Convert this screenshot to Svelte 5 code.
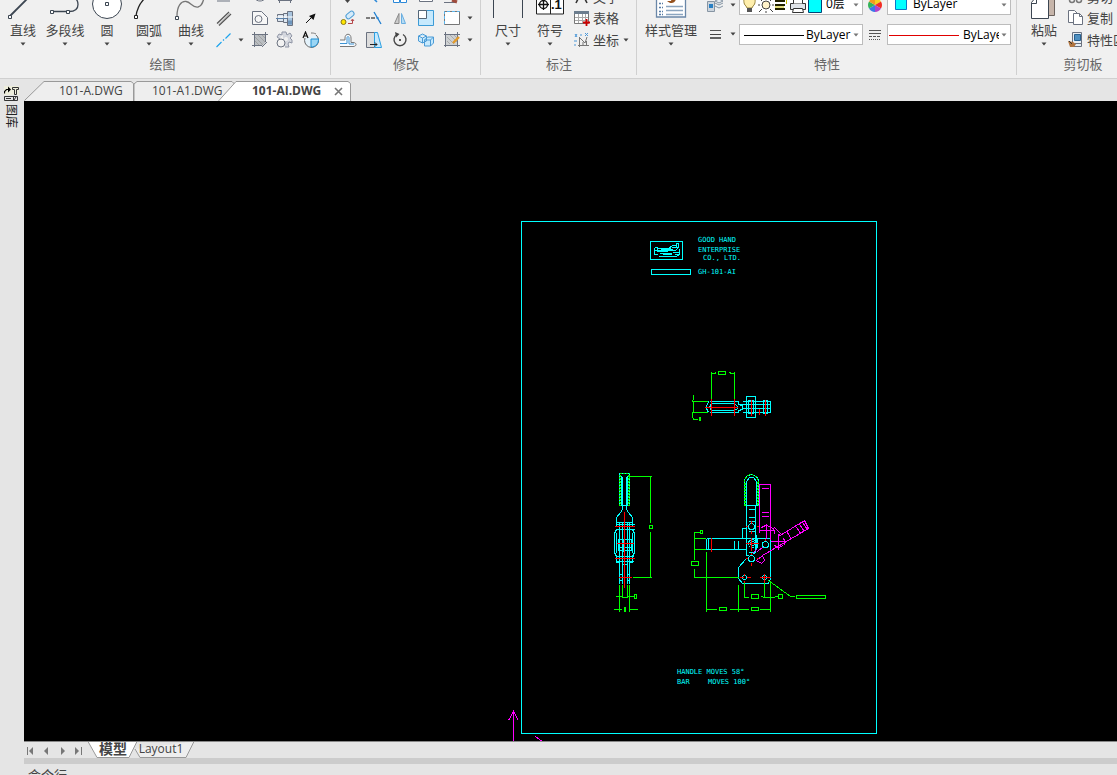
<script>
  const drawTools = [
    { label: '直线', icon: 'line' },
    { label: '多段线', icon: 'poly' },
    { label: '圆', icon: 'circle' },
    { label: '圆弧', icon: 'arc' },
    { label: '曲线', icon: 'curve' }
  ];
  const drawGrid = [
    ['cutA', '', 'cutB', 'cutC', ''],
    ['dline', '', 'region', 'cylinder', 'ray'],
    ['xline', 'drop', 'hatch', 'gear', 'textcircle']
  ];
  const modifyGrid = [
    ['cutD', 'cutE', 'cutF', 'cutG', 'cutH', ''],
    ['copy', 'trim', 'mirror', 'scale', 'select', 'drop'],
    ['offset', 'stretch', 'rotate', 'array', 'edit', 'drop']
  ];
  const names = {
    cutA: '构造', cutB: '椭圆', cutC: '矩形', dline: '双线', region: '面域', cylinder: '轴', ray: '箭头',
    xline: '中心线', drop: '更多', hatch: '填充', gear: '齿轮', textcircle: '局部放大',
    cutD: '移动', cutE: '打断', cutF: '复制对象', cutG: '圆角', cutH: '删除', copy: '复制', trim: '修剪',
    mirror: '镜像', scale: '缩放', select: '选择', offset: '偏移', stretch: '拉伸', rotate: '旋转',
    array: '阵列', edit: '编辑填充'
  };
  const docs = [
    { name: '101-A.DWG', kind: 'first' },
    { name: '101-A1.DWG', kind: 'mid' },
    { name: '101-AI.DWG', kind: 'active' }
  ];
</script>

{#snippet drop()}
  <svg class="drop" width="10" height="10" viewBox="0 0 10 10"><path d="M2.500 3.500h5L5 6.500z" fill="currentColor" /></svg>
{/snippet}

{#snippet big(kind)}
  <svg width="42" height="22" viewBox="0 0 42 22" fill="none" stroke="#3c4652" stroke-width="1.3">
    {#if kind === 'line'}
      <path d="M8 16L25-1" stroke-width="1.8" /><path d="M6.500 15.500h3v3h-3z" fill="#fff" stroke-width="1" />
    {:else if kind === 'poly'}
      <path d="M8 11.500h17c6 0 9-3 9-7s-2-6-4-7" />
      <path d="M6.500 10.500h3v3h-3zM22.500 10.500h3v3h-3z" fill="#fff" stroke-width="1" />
    {:else if kind === 'circle'}
      <circle cx="21" cy="4" r="14.500" fill="#fff" stroke-width="1" /><path d="M19.500 2.500h3v3h-3z" fill="#fff" stroke-width="1" />
    {:else if kind === 'arc'}
      <path d="M8 16C9 9 12 3 17-2" stroke="#222" /><path d="M6.500 15.500h3v3h-3z" fill="#fff" stroke="#222" stroke-width="1" />
    {:else if kind === 'curve'}
      <path d="M7 16C7 6 11 1 16 1.500S22 8 28 7c4-1 5-5 6-9" stroke="#777" /><path d="M5.500 16.500h3v3h-3z" fill="#fff" stroke-width="1" />
    {:else if kind === 'dim'}
      <path d="M6.500 0v18M35.500 0v18" stroke-width="1" />
    {:else if kind === 'symbol'}
      <path d="M7.500-2h27v16h-27z" fill="#fff" stroke-width="1" stroke="#222" /><path d="M21.500 0v14" stroke="#222" stroke-width="1" />
      <circle cx="14.500" cy="4.500" r="4" stroke="#111" /><path d="M9 4.500h11M14.500 0v10" stroke="#111" />
    {:else if kind === 'style'}
      <path d="M6.500-2h29v19h-29z" fill="#fff" stroke="#6a87a8" />
      <path d="M9 3.500h4M9 7.500h4M9 11.500h4M9 14.500h4" stroke="#567ba5" stroke-dasharray="2 1" /><path d="M16 6.500h17M16 10.500h17M16 14.500h17" stroke="#8ba5bf" />
      <path d="M17 1c3 3 8 3 9-2l-4-1-1 3z" fill="#96521f" stroke="none" />
    {:else if kind === 'paste'}
      <path d="M24.500-1h7v16.500h-7z" fill="#c6b5aa" stroke="#6b625d" stroke-width="1" />
      <path d="M8.500 18.500v-16l4-5h13v21z" fill="#fff" stroke-width="1" /><path d="M8.500 3.500h5v-5" stroke-width="1" />
    {/if}
  </svg>
{/snippet}

{#snippet small(kind, h = 18)}
  <svg width="18" height={h} viewBox={h === 7 ? '0 0 18 7' : '0 0 18 18'} fill="none" stroke="#6b7280" stroke-width="1">
    {#if kind === 'cutA'}<path d="M2 1h13" />
    {:else if kind === 'cutB'}<path d="M4-2c1 4 9 4 10 0" />
    {:else if kind === 'cutC'}<path d="M2 .5h14M3.500 0v3M14.500 0v3" />
    {:else if kind === 'cutD'}<path d="M6 0h5L8.500 3z" fill="#444" stroke="none" />
    {:else if kind === 'cutE'}<path d="M9-1l3 3" stroke="#2b88d8" stroke-width="1.500" />
    {:else if kind === 'cutF'}<path d="M2.500-1h6v3.500h-6zM9.500-1h6v3.500h-6z" stroke="#2b88d8" fill="#fff" />
    {:else if kind === 'cutG'}<path d="M2.500-1v2.500h13V-1" fill="#fff" />
    {:else if kind === 'cutH'}<path d="M1 2.500h12" /><path d="M9 0l5 2" stroke="#a04b3c" stroke-width="3" />
    {:else if kind === 'dline'}<path d="M2 14.500L14 3M4 16.500L16 5" stroke="#555" stroke-width="1.200" /><path d="M3 15.500L15 4" stroke="#bbb" />
    {:else if kind === 'region'}<path d="M1.500 15.500v-13h9l6 6v7z" fill="#f7f7f7" /><circle cx="7.500" cy="10" r="3.500" />
    {:else if kind === 'cylinder'}
      <path d="M1.500 5.500h6v7h-6zM7.500 4.500h4v9h-4z" fill="#dbe6f1" /><path d="M11.500 2.500h5v14h-5z" fill="#a9c5df" />
      <path d="M1 8h16" stroke="#fff" /><path d="M0 9.500h11" stroke="#5b80a8" /><path d="M12 13.500h4" stroke="#6f96bd" stroke-width="4" />
    {:else if kind === 'ray'}<path d="M4 14l5-5" stroke="#111" /><path d="M13.500 4.500L11.500 11 7 7z" fill="#111" stroke="none" />
    {:else if kind === 'xline'}<path d="M1.500 16l5-5M8 9.500l1-1M10.500 7.500l5-5" stroke="#1ca3ec" stroke-width="1.200" />
    {:else if kind === 'hatch'}
      <path d="M3 3h12v8l-4 4H3z" fill="#b9bdc1" stroke="none" /><path d="M3.500 1v15M14.500 1v10M1 3.500h16M1 14.500h10M11 16l5-5" />
      <path d="M4 6l8 8M7 4l7 7M11 4l3 3M4 10l4 4" stroke="#999" stroke-width=".8" />
    {:else if kind === 'gear'}
      <path d="M6 1h4l1 3 3-2 2 3-2 2 2 2v3l-3-1-1 2 1 3H9M6 1v3L3 3 1 6l3 2" fill="#d4d7de" stroke="#8f95a5" />
      <circle cx="5" cy="12" r="4" fill="#f2f2f2" /><circle cx="10" cy="8" r="2" fill="#f2f2f2" stroke="none" />
    {:else if kind === 'textcircle'}
      <path d="M3 7a7 7 0 1 0 11-3" fill="#e3f2fb" stroke="#666" /><path d="M9 8h7.500c0 5-3 8-7.500 8z" fill="#9bd6f5" stroke="#1d8ed1" />
      <path d="M1 7l2.500-6L6 7M2 5h3" stroke="#111" stroke-width="1.200" /><path d="M9 2c2 0 3 0 5 1" stroke="#777" />
    {:else if kind === 'copy'}
      <circle cx="4.500" cy="13" r="2.500" fill="#ffe600" stroke="#8a7a1c" /><rect x="6.500" y="3.500" width="9" height="5" rx="2.500" fill="#d5ebfa" stroke="#4f9ed5" transform="rotate(-40 11 6)" />
      <path d="M9 14.500h4.500V11M12 12l1.500-2 1.500 2" stroke="#b4464a" />
    {:else if kind === 'trim'}<path d="M1 9h9" stroke="#555" stroke-width="1.400" stroke-dasharray="4 1" /><path d="M11 9h3" stroke="#2b88d8" /><path d="M9 3l7 12" stroke="#1e7ed0" stroke-width="1.300" />
    {:else if kind === 'mirror'}<path d="M8 4.500v10H3.500z" fill="#ccc" stroke="#888" /><path d="M10.500 4.500v10h4z" fill="#b5dcf5" stroke="#69aee0" />
    {:else if kind === 'scale'}<path d="M1.500 1.500h15v15h-15z" fill="#c6e9fd" stroke="#3c9bd6" /><path d="M1.500 1.500h8v8h-8z" fill="#fff" stroke="#567" />
    {:else if kind === 'select'}<path d="M1.500 2.500h15v13h-15z" fill="#fff" stroke="#777" /><path d="M1.500 15v-12.500h15" stroke="#5bb5ee" stroke-dasharray="3 2" />
    {:else if kind === 'offset'}
      <path d="M1 15.500h13c4 0 4-4 0-4h-2V7c0-5-6-5-6 0v2H1" fill="#f7fbff" stroke="#777" /><path d="M1 12.500h7V7c0-2 2-2 2 0v6h5" stroke="#3c93d3" />
    {:else if kind === 'stretch'}<path d="M1.500 1.500h8v15h-8z" fill="#ddd" /><path d="M9.500 1.500h3l4 15h-7z" fill="#c6e9fd" stroke="#2b9fe2" /><path d="M5 13.500h7M10 11.500l2 2-2 2" stroke="#222" />
    {:else if kind === 'rotate'}<path d="M6 3.500A6 6 0 1 0 12 3.500" stroke="#444" stroke-width="1.400" /><path d="M4 1l4.500 2L5 6.500z" fill="#444" stroke="none" /><circle cx="9" cy="9" r="1" fill="#222" stroke="none" />
    {:else if kind === 'array'}
      <path d="M1.500 5l4-2 4 2v5l-4 2-4-2zM1.500 5l4 2 4-2M5.500 7v5M7.500 9l3-3h6v6l-3 3h-6zM7.500 9h6v6M13.500 9l3-3" fill="#c6e9fd" stroke="#4b9bd6" />
    {:else if kind === 'edit'}
      <path d="M3 3h12v11H3z" fill="#ced1d3" stroke="none" /><path d="M2.500 1v15M14.500 1v15M1 3.500h16M1 14.500h16" />
      <path d="M4 6l7 7M7 4l7 7M11 4l3 3M4 10l3 3" stroke="#999" stroke-width=".7" /><path d="M10 12l6-6" stroke="#e39b2b" stroke-width="2.400" />
    {:else if kind === 'table'}
      <path d="M1.500 2.500h14v12h-14z" fill="#fff" stroke="#777" /><path d="M1 3.500h15" stroke="#6c7d8e" stroke-width="3" /><path d="M2 8.500h13M2 11.500h13M5.500 5v9M9.500 5v9M12.500 5v9" stroke="#aaa" />
      <path d="M10 13.500h7M13.500 10v7" stroke="#c00" stroke-width="1.800" />
    {:else if kind === 'coord'}
      <path d="M6.500 16V6M5 14.500h11M7 7l5 5 2-6M10 14v-3M13.500 14v-4" stroke="#777" /><path d="M2 3l2 3M4 3L2 6M7 4h2M12 2l3 3M15 2l-3 3M1 10h3M1 14h2" stroke="#4a97d8" />
    {:else if kind === 'bars'}<path d="M4 5.500h11" stroke="#555" /><path d="M4 9.500h11" stroke="#444" /><path d="M4 13h11" stroke="#333" stroke-width="1.500" />
    {:else if kind === 'ltype'}<path d="M3 4.500h12M3 7.500h12" stroke="#555" /><path d="M3 10.500h12" stroke="#555" stroke-dasharray="3 1" /><path d="M3 13.500h12" stroke="#555" stroke-dasharray="1 1" />
    {:else if kind === 'pages'}<path d="M1.500 1.500h6l3 3v9h-9z" fill="#fff" /><path d="M6.500 4.500h6l3 3v8h-9z" fill="#fff" /><path d="M12.500 4.500v3h3" />
    {:else if kind === 'match'}
      <path d="M5.500 1.500h9v14h-9z" fill="#e8eef4" /><path d="M7.500 3.500h6v6h-6z" fill="#4d8fc0" stroke="#27608f" /><path d="M8 12.500h6" /><path d="M1 10l5 1 3 2-2 3H3z" fill="#b0743f" stroke="none" /><path d="M2 10l3 3" stroke="#333" />
    {/if}
  </svg>
{/snippet}

{#snippet tool(label, icon)}
  <button class="tool">{@render big(icon)}<span>{label}</span>{@render drop()}</button>
{/snippet}

{#snippet grid(rows)}
  {#each rows as row, r}
    {#each row as k}
      {#if k === 'drop'}
        <button class="cell" aria-label="更多">{@render drop()}</button>
      {:else if k}
        <button class="cell" aria-label={names[k]}>{@render small(k, r === 0 ? 7 : 18)}</button>
      {:else}
        <span></span>
      {/if}
    {/each}
  {/each}
{/snippet}

<div class="page">
  <header class="ribbon">
    <section class="group draw">
      <div class="body">
        {#each drawTools as t}{@render tool(t.label, t.icon)}{/each}
        <div class="grid g-draw">{@render grid(drawGrid)}</div>
      </div>
      <h2>绘图</h2>
    </section>
    <section class="group modify">
      <div class="body"><div class="grid g-mod">{@render grid(modifyGrid)}</div></div>
      <h2>修改</h2>
    </section>
    <section class="group note">
      <div class="body">
        {@render tool('尺寸', 'dim')}
        <div class="symbol">{@render tool('符号', 'symbol')}<b>.1</b></div>
        <div class="rows">
          <button class="row cut"><svg width="18" height="7" viewBox="0 0 18 7"><path d="M3 3l3-6M14 3l-3-6" stroke="#333" stroke-width="1.600" /></svg><span>文字</span></button>
          <button class="row">{@render small('table')}<span>表格</span></button>
          <button class="row">{@render small('coord')}<span>坐标</span>{@render drop()}</button>
        </div>
      </div>
      <h2>标注</h2>
    </section>
    <section class="group props">
      <div class="body">
        <div class="wide">{@render tool('样式管理', 'style')}</div>
        <div class="minis">
          <button class="mini top" aria-label="图层管理">
            <svg width="18" height="14" viewBox="0 0 18 14" fill="none" stroke="#8795a3"><path d="M1.500 1.500h7v10h-7z" fill="#ccd5de" /><path d="M3 4h4v4H3z" fill="#2980c4" stroke="none" /><path d="M9 1l4-2 4 2-4 2zM9 3l4 2 4-2M9 6l4 2 4-2" fill="#e7edf2" /></svg>
            {@render drop()}
          </button>
          <button class="mini" aria-label="线宽">{@render small('bars')}{@render drop()}</button>
        </div>
        <div class="combos">
          <div class="combo top">
            <svg width="84" height="14" viewBox="0 0 84 14">
              <path d="M6 6C3 4 4-1 4-3h11c0 2 1 7-2 9l-1 2H7z" fill="#ffefad" stroke="#9a8640" /><path d="M7 8h5v4H7z" fill="#555" />
              <circle cx="26" cy="5" r="4" fill="#fff2c9" stroke="#444" /><path d="M20 5h-2M32 5h2M26 11v2M22 9l-3 3M30 9l3 3M22 1l-3-3M30 1l3-3" stroke="#444" />
              <path d="M35 1h10M35 5h10M35 9h10" stroke="#222200" stroke-width="2" /><path d="M35 7h9M46.500 0v4" stroke="#c7bd00" />
              <path d="M50.500 3.500h15v6h-15z" fill="#dfe3e8" stroke="#333" /><path d="M53.500 3.500V-2h9v5.500M53.500 8.500h9l1 4h-11z" fill="#fff" stroke="#333" />
              <path d="M68.500-1h13v13.500h-13z" fill="#0ff" stroke="#047" />
            </svg>
            <select class="fixed" aria-label="图层"><option>0层</option></select>{@render drop()}
          </div>
          <div class="combo">
            <svg height="18" width="60"><path d="M0 9.500h60" stroke="#000" /></svg>
            <select class="fixed" aria-label="线宽值"><option>ByLayer</option></select>{@render drop()}
          </div>
        </div>
        <div class="swatches">
          <svg width="25" height="14" viewBox="0 0 25 14">
            <path d="M12 5V-2A7 7 0 0 1 18 1.500z" fill="#f7d11e" /><path d="M12 5l6-3.500A7 7 0 0 1 18 8.500z" fill="#f22c24" /><path d="M12 5l6 3.500A7 7 0 0 1 12 12z" fill="#b143c9" /><path d="M12 5v7A7 7 0 0 1 6 8.500z" fill="#3a78e8" /><path d="M12 5L6 8.500A7 7 0 0 1 6 1.500z" fill="#33b35a" /><path d="M12 5L6 1.500A7 7 0 0 1 12-2z" fill="#f39a1e" />
          </svg>
          {@render small('ltype')}
        </div>
        <div class="combos">
          <div class="combo top">
            <svg width="22" height="14" viewBox="0 0 22 14"><path d="M7.500-1h11v10.500h-11z" fill="#0ff" stroke="#0878c8" /></svg>
            <select aria-label="颜色"><option>ByLayer</option></select>{@render drop()}
          </div>
          <div class="combo tight">
            <svg width="70" height="18"><path d="M0 9.500h70" stroke="#e00000" /></svg>
            <select aria-label="线型"><option>ByLayer</option></select>{@render drop()}
          </div>
        </div>
      </div>
      <h2>特性</h2>
    </section>
    <section class="group clip">
      <div class="body">
        {@render tool('粘贴', 'paste')}
        <div class="rows">
          <button class="row cut"><svg width="18" height="7" viewBox="0 0 18 7" fill="none" stroke="#777" stroke-width="1.500"><circle cx="5" cy="0" r="2.500" /><circle cx="12" cy="0" r="2.500" /></svg><span>剪切</span></button>
          <button class="row">{@render small('pages')}<span>复制</span></button>
          <button class="row">{@render small('match')}<span>特性匹配</span></button>
        </div>
      </div>
      <h2>剪切板</h2>
    </section>
  </header>

  <div class="work">
    <aside>
      <svg width="16" height="18" viewBox="0 0 16 18" fill="none" stroke="#333">
        <path d="M0 0h15v9H0z" fill="#eeeedc" stroke="none" />
        <path d="M.5 7.500v-2l2-2H5" stroke="#000" stroke-width="1.200" /><path d="M4 .5l3 3-3 3z" fill="#000" stroke="none" /><path d="M8.500 1.500h6v2h-2v5h-2v-5h-2z" />
        <path d="M.5 10.500h13v4H.5z" /><path d="M2 12.500h5M9.500 11v3M12 11l-2 3" />
      </svg>
      <span class="side">图库</span>
    </aside>
    <main>
      <nav class="docs">
        {#each docs as d}
          <div class="doc {d.kind}">
            {#if d.kind === 'first'}
              <svg width="110" height="22" viewBox="0 0 110 22"><path d="M.5 21.500L20 2.500h87l2.500 2V22" fill="#eee" stroke="#999" /></svg>
            {:else if d.kind === 'mid'}
              <svg width="103" height="22" viewBox="0 0 103 22"><path d="M0 22V5l3-2.500h95l3 3V22" fill="#eee" stroke="#999" /></svg>
            {:else}
              <svg width="133" height="22" viewBox="0 0 133 22"><path d="M.5 22L18 2.500h112l2.500 2V22" fill="#fff" stroke="#999" /></svg>
            {/if}
            <button>{d.name}</button>
            {#if d.kind === 'active'}
              <button class="close" aria-label="关闭"><svg width="9" height="9" viewBox="0 0 9 9"><path d="M1 1l7 7M8 1L1 8" stroke="#777" stroke-width="1.600" /></svg></button>
            {/if}
          </div>
        {/each}
      </nav>
      <div class="canvas">
        <svg class="dwg" width="100%" height="100%" fill="none">
          <g transform="translate(-23.500 -100.500)" shape-rendering="crispEdges">
            <g stroke="#0ff">
              <path d="M521 221h355v512H521z" />
              <path d="M650 241h32v18h-32zM651 269h39v5h-39z" />
              <path d="M654 247h3M654 250h3M654 254h3M654 247v7M657 248h13M657 251h10M659 253h12M656 250h14M668 248l4-3h4M670 250h5l3-3v-4h-2v3M658 256h18l3-2v-6M662 254h9M660 249h12M672 252h7M674 254h4M671 247h6" />
              <path d="M657 248h6v3h-6z" />
              <!-- plan view -->
              <path d="M709 401h29M709 412h29M708 401l-2 5v2l2 4M711 403h23l3 3v2l-3 2h-23l-2-3 2-4zM738 404h32M742 401h28v11h-28M741 408h29M738 401v3l4 1v4l-4 1v2M746 396h9v21h-9zM748 400h5v13h-5zM763 400h4v13h-4zM757 412h4" />
              <!-- front view -->
              <path d="M622 476v33l-2 3-4 5v8M626 476v33l2 3 4 5v8M619 521v62M622 521v62M627 521v62M629 521v62" />
              <path d="M616 522h16M615 524h19M615 529h19M616 529l-2 4v19l2 4v6h3M632 529l2 4v19l-2 4v6h-3M615 556h18M615 561h18M618 539h13v11h-13zM618 547h13M623 538v13M616 532v20M632 532v20M622 564h5M619 574h3M627 574h2M619 580h3M627 580h2" />
              <!-- side view -->
              <path d="M746 505h9v47M746 505v47M748 509h6M748 517h6M748 521h6M748 531h7M748 552h6M742 538v-10h4M756 534v12M706 538h64M706 549h40M706 538v11M708 538v11M734 540v8M738 540v8M770 538v40l-2 5h-26l-4-5v-11l8-9M748 555h-2v-9M757 538v8l-4 8" />
              <circle cx="751" cy="526" r="3" /><circle cx="752" cy="543" r="4" /><circle cx="752" cy="543" r="2" />
              <circle cx="765" cy="544" r="3" /><circle cx="751" cy="558" r="3" />
              <circle cx="744" cy="577" r="2" /><circle cx="764" cy="577" r="2" />
              <path d="M744 505v-26l3-4 4-1 5 2 2 4v25zM746 505v-24l3-4h4l3 4v24M619 473h10v32h-10zM621 475v30M627 475v30" />
            </g>
            <g stroke="#0f0">
              <path d="M744 505v-26l3-4 4-1 5 2 2 4v25M745 505v-24M757 481v24M619 473h10M620 474v31M628 474v31M619 505v-31M629 505v-31" stroke-dasharray="2 1" />
              <path d="M711 371v27M734 371v27M711 373h3l2-1M734 373h-3l-2-1M718 371h7v3h-7zM693 394v4l-1 3h15M693 401v11M707 412h-15v4l1 3h4M699 417h1v3h-1z" />
              <path d="M627 476h24M650 476v46M649 525h3v3h-3zM650 531v46M632 577h19M619 584v27M622 584v13h5v-13M629 584v27M615 596h7M627 596h7M634 594h2v4h-2zM613 609h8M628 609h9M624 607h1v4h-1z" />
              <path d="M693 538h12M693 549h12M694 559v-27h5M700 530h2v3h-2zM691 561h7v4h-7zM694 568v9M693 577h45M706 551v60M738 584v27M770 582v29M744 582v15h4M764 582v15M706 609h10M729 609h19M759 609h11M719 607h7v3h-7zM751 607h7v3h-7zM751 594h7v4h-7zM761 596l3 1h6M771 597l7-1M778 594h4v4h-4zM768 580l22 16h4M796 595h29v3h-29z" />
            </g>
            <g stroke="#f0f">
              <path d="M759 532v-48h11v55M761 488h7M761 512h7M761 516h7M759 530h14M766 523v15M761 527l4-2 5 1 4 4v3M770 541h16M778 533v16M783 538l2 4-2 3-5 2-4-2M762 555l46-27-4-8-26 16M796 527l5 7M799 524l5 7M802 522l5 7M787 532l4 7M772 529l2-2 6 6-2 3M756 549l-4 4M757 551l6-5M756 560l5 3 3-3-2-5z" />
              <path d="M513 742v-31l-5 9M513 711l5 9M535 736l4 3 5 3" />
            </g>
            <g stroke="#f00">
              <path d="M704 407h33M711 398v17M734 398v17M751 399v16M759 408v6M765 399v16M624 511v76M614 526h20M616 543h17M614 558h20M618 577h13" />
              <path d="M711 537v14M745 526h2M756 526h2M751 520v3M751 530v3M745 543h13M751 537v13M765 538v2M745 558h2M756 558h2M751 552v2M751 562v3M739 577h4M746 577h4M744 573v2M744 580v2M759 577h11M764 573v9" />
            </g>
          </g>
          <g transform="translate(-24 -101)" class="lettering">
            <text x="698" y="242">GOOD HAND</text><text x="698" y="252">ENTERPRISE</text><text x="703" y="260">CO., LTD.</text>
            <text x="698" y="274">GH-101-AI</text>
            <text x="677" y="674">HANDLE MOVES 58°</text><text x="677" y="684">BAR</text><text x="708" y="684">MOVES 100°</text>
          </g>
        </svg>
      </div>
      <nav class="layouts">
        <button aria-label="第一个"><svg width="16" height="16"><path d="M3.500 5v8" stroke="#777" /><path d="M9 5v8L5 9z" fill="#777" /></svg></button>
        <button aria-label="上一个"><svg width="16" height="16"><path d="M8 5v8L4 9z" fill="#777" /></svg></button>
        <button aria-label="下一个"><svg width="16" height="16"><path d="M5 5v8l4-4z" fill="#777" /></svg></button>
        <button aria-label="最后一个"><svg width="16" height="16"><path d="M9.500 5v8" stroke="#777" /><path d="M3 5v8l4-4z" fill="#777" /></svg></button>
        <button class="model"><svg width="50" height="16"><path d="M0-.5l9 16h32l8-16" fill="#fff" stroke="#999" /></svg><span>模型</span></button>
        <button class="layout"><svg width="62" height="16"><path d="M1 7l5 8.500h46L60-.5" fill="#eee" stroke="#999" /></svg><span>Layout1</span></button>
      </nav>
      <div class="split"></div>
      <div class="command">命令行</div>
    </main>
  </div>
</div>

<style>
  :global(body) { margin: 0; overflow: hidden; }
  .page {
    display: flex; flex-direction: column; height: 100vh; overflow: hidden;
    background: #e5e5e5; color: #444; font: 13px/16px "Open Sans", "Noto Sans CJK SC", sans-serif;
  }
  button { border: 0; padding: 0; margin: 0; background: none; color: inherit; font: inherit; white-space: nowrap; }
  svg { display: block; flex: none; }
  .ribbon { display: flex; flex: none; height: 78px; background: #f0f0f0; border-bottom: 1px solid #d0d0d0; overflow: hidden; }
  .group { display: flex; flex: none; flex-direction: column; position: relative; box-sizing: border-box; }
  .group::after { content: ""; position: absolute; right: 0; top: 0; height: 75px; border-right: 1px solid #d0d0d0; }
  .body { display: flex; height: 56px; }
  h2 { margin: 0; font: inherit; text-align: center; color: #666; }
  .draw { width: 331px; }
  .draw .body { padding-left: 2px; }
  .draw h2 { padding-right: 6px; }
  .modify { width: 150px; }
  .modify .body { padding-left: 4px; }
  .note { width: 156px; }
  .note .body { padding-left: 6px; }
  .props { width: 380px; }
  .props .body { padding-left: 4px; }
  .clip { width: 132px; }
  .clip .body { padding-left: 6px; }
  .tool { display: flex; flex-direction: column; align-items: center; width: 42px; height: 50px; }
  .tool span { height: 17px; }
  .wide { width: 60px; display: flex; justify-content: center; }
  .symbol { position: relative; }
  .symbol b { position: absolute; left: 22px; top: -3px; font: bold 13px/16px "Liberation Sans", sans-serif; color: #111; }
  .grid { display: grid; grid-template-rows: 7px 22px 22px; }
  .g-draw { grid-template-columns: 23px 12px 25px 26px 26px; }
  .g-mod { grid-template-columns: repeat(5, 26px) 10px; }
  .cell { display: flex; align-items: center; justify-content: center; }
  .rows { display: flex; flex-direction: column; padding-left: 2px; }
  .row { display: flex; align-items: center; height: 22px; gap: 2px; }
  .row.cut { height: 7px; align-items: flex-end; overflow: hidden; }
  .row.cut span { line-height: 20px; }
  .minis { display: flex; flex-direction: column; gap: 10px; width: 38px; padding-left: 5px; box-sizing: border-box; }
  .mini { display: flex; align-items: center; gap: 4px; height: 20px; }
  .mini.top { height: 14px; align-items: flex-start; }
  .combos { display: flex; flex-direction: column; gap: 9px; width: 124px; }
  .combo { display: flex; align-items: center; box-sizing: border-box; height: 21px; border: 1px solid #bcbcbc; background: #fff; color: #777; padding: 0 1px 0 4px; }
  .combo.top { height: 15px; border-top: 0; padding-left: 0; align-items: flex-start; }
  .combo.top select { margin-top: -5px; }
  .combo.tight { padding-left: 1px; }
  .combo.tight select { padding-left: 4px; }
  select { appearance: none; flex: 1; min-width: 0; height: 18px; border: 0; padding: 0; padding-left: 3px; margin: 0; background: none; color: #000; font: 12px/18px "Open Sans", "Noto Sans CJK SC", sans-serif; overflow: hidden; }
  .fixed { padding-left: 2px; }
  .swatches { display: flex; flex-direction: column; align-items: center; gap: 12px; width: 24px; }
  .work { display: flex; flex: 1; min-height: 0; }
  aside { flex: none; width: 24px; box-sizing: border-box; padding: 7px 0 0 4px; }
  .side { display: block; writing-mode: vertical-rl; text-orientation: sideways; font-size: 12px; line-height: 14px; color: #222; }
  main { display: flex; flex: 1; flex-direction: column; min-width: 0; }
  .docs { display: flex; flex: none; height: 22px; font-size: 12px; }
  .doc { position: relative; display: flex; align-items: center; }
  .doc > svg { position: absolute; left: 0; top: 0; }
  .doc button { position: relative; padding-top: 2px; }
  .first { width: 110px; padding-left: 35px; box-sizing: border-box; }
  .mid { width: 103px; padding-left: 18px; box-sizing: border-box; }
  .active { width: 133px; margin-left: -19px; padding-left: 34px; box-sizing: border-box; font-weight: bold; gap: 13px; }
  .canvas { flex: 1; min-height: 0; overflow: hidden; background: #000; border-bottom: 1px solid #888; }
  .lettering { fill: #0ff; font: 7px "DejaVu Sans Mono", monospace; }
  .layouts { display: flex; flex: none; height: 16px; font-size: 12px; }
  .model, .layout { position: relative; display: flex; justify-content: center; }
  .model { width: 50px; font-size: 14px; font-weight: bold; z-index: 1; }
  .layout { width: 62px; margin-left: -4px; padding-right: 8px; box-sizing: border-box; }
  .model svg, .layout svg { position: absolute; left: 0; top: 0; }
  .model span, .layout span { position: relative; line-height: 14px; }
  .split { flex: none; height: 6px; background: #ccc; }
  .command { flex: none; height: 11px; overflow: hidden; padding: 0 4px; line-height: 22px; }
</style>
